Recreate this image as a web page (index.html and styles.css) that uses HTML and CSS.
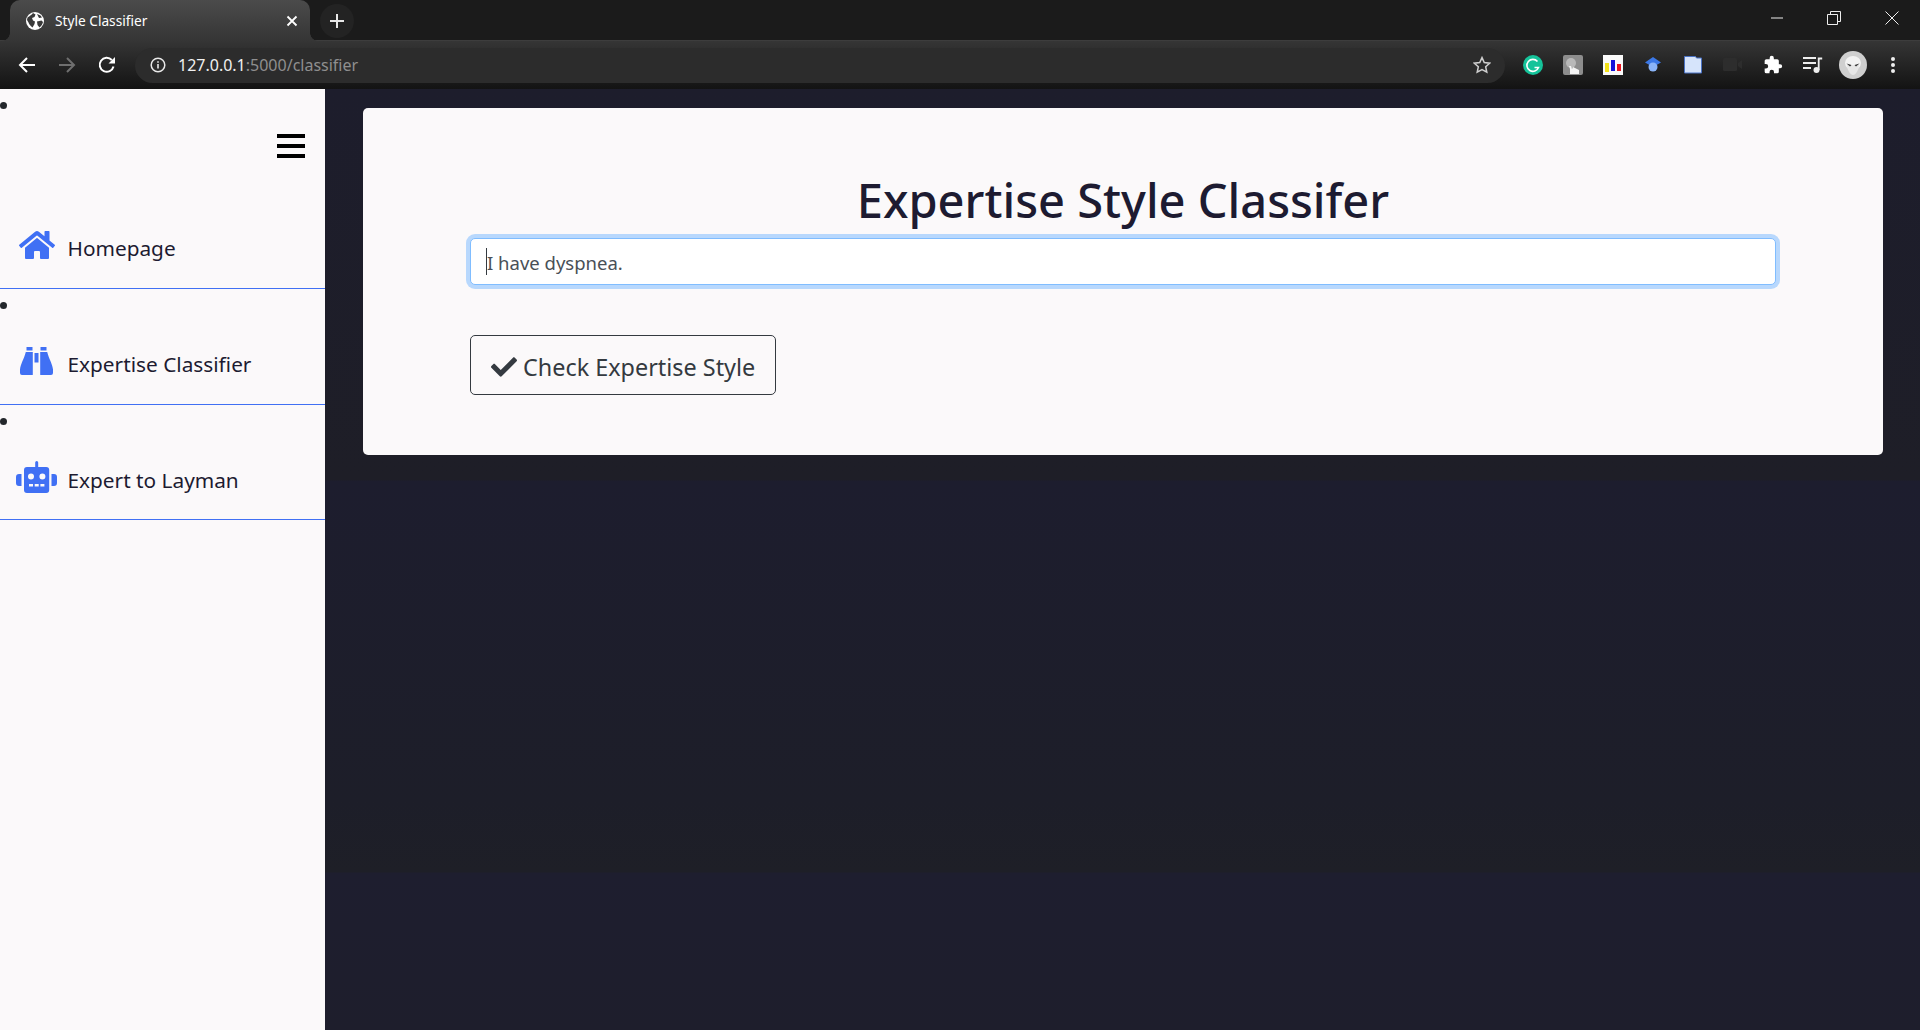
FILE: index.html
```html
<!DOCTYPE html>
<html lang="en">
<head>
<meta charset="utf-8">
<title>Style Classifier</title>
<link rel="stylesheet" href="styles.css">
</head>
<body>
<header class="browser">
  <div class="tabbar">
    <div class="tab">
      <svg class="favicon" viewBox="0 0 18 18" width="18" height="18"><circle cx="9" cy="9" r="9" fill="#fff"/><path d="M1.500 5.500C3.500 4 6 2.500 7 1l2.500 1.500-1 2.500-2.500 1 1 2.500 2 1-.5 2.500-2 3.500C4.500 14 3 12 2.500 10.500L1 8zM11 9.500l4.500-1 1.500 1.500c-.5 2-1.500 4-3.500 5.500L11.500 13zM11 2l3.500 1.500 1.500 2-3 .5z" fill="#3a3a3a"/></svg>
      <span class="tab-title">Style Classifier</span>
      <svg class="tab-close" viewBox="0 0 12 12" width="12" height="12"><path d="M1.500 1.500l9 9M10.500 1.500l-9 9" stroke="#fff" stroke-width="1.800"/></svg>
    </div>
    <div class="newtab"><svg viewBox="0 0 16 16" width="16" height="16"><path d="M8 1v14M1 8h14" stroke="#e8e8e8" stroke-width="2"/></svg></div>
    <div class="winctl">
      <svg viewBox="0 0 14 14" width="14" height="14"><path d="M2 7h12" stroke="#eee" stroke-width="1"/></svg>
      <svg viewBox="0 0 14 14" width="14" height="14"><path d="M.5 3.500h10v10H.5zM3.500 3.500V.5h10v10h-3" fill="none" stroke="#eee" stroke-width="1"/></svg>
      <svg viewBox="0 0 14 14" width="14" height="14"><path d="M.5.5l13 13M13.500.5l-13 13" stroke="#eee" stroke-width="1"/></svg>
    </div>
  </div>
  <div class="toolbar">
    <div class="navbtns">
      <svg viewBox="0 0 18 18" width="18" height="18"><path d="M17 9H2M9 2L2 9l7 7" fill="none" stroke="#fff" stroke-width="2"/></svg>
      <svg viewBox="0 0 18 18" width="18" height="18"><path d="M1 9h15M9 2l7 7-7 7" fill="none" stroke="#6f6f6f" stroke-width="2"/></svg>
      <svg viewBox="0 0 18 18" width="18" height="18"><path d="M15.500 10.500A7 7 0 1 1 13.800 4" fill="none" stroke="#fff" stroke-width="2"/><path d="M10.500 7.500H17V1z" fill="#fff"/></svg>
    </div>
    <div class="omnibox">
      <svg class="info" viewBox="0 0 16 16" width="16" height="16"><circle cx="8" cy="8" r="6.800" fill="none" stroke="#e8e8e8" stroke-width="1.500"/><path d="M8 7v4.500M8 4.200v1.600" stroke="#e8e8e8" stroke-width="1.600"/></svg>
      <span class="url"><span class="host">127.0.0.1</span>:5000/classifier</span>
      <svg class="star" viewBox="0 0 20 20" width="18" height="18"><path d="M10 1.800l2.500 5.500 6 .7-4.400 4 1.200 5.900L10 15l-5.300 2.900 1.200-5.900-4.400-4 6-.7z" fill="none" stroke="#cfcfcf" stroke-width="1.700"/></svg>
    </div>
    <div class="exts">
      <span class="ext"><svg viewBox="0 0 20 20" width="20" height="20"><circle cx="10" cy="10" r="10" fill="#15c39a"/><path d="M14.500 6.500A6 6 0 1 0 15.500 12.500H11.500" fill="none" stroke="#fff" stroke-width="1.600"/></svg></span>
      <span class="ext"><svg viewBox="0 0 20 20" width="20" height="20"><rect width="20" height="20" rx="2" fill="#8d8d8d"/><circle cx="8" cy="8" r="5" fill="#b9b9b9"/><path d="M7 19v-5l-1-3 2 0 1 3 1-2 6 3v4z" fill="#f4f4f4"/></svg></span>
      <span class="ext"><svg viewBox="0 0 20 20" width="20" height="20"><rect width="20" height="20" fill="#fafafa"/><rect x="2" y="8" width="4" height="9" fill="#f4e21a"/><rect x="8" y="5" width="4" height="11" fill="#1414d8"/><rect x="14" y="9" width="4" height="7" fill="#e8141e"/></svg></span>
      <span class="ext"><svg viewBox="0 0 18 18" width="18" height="18"><path d="M9 1l8 5.500-8 4.500-8-4.500z" fill="#3b78e7"/><circle cx="9" cy="11" r="4.500" fill="#8ab4f8"/></svg></span>
      <span class="ext"><svg viewBox="0 0 18 18" width="18" height="18"><path d="M.5.5h11l1 1.500h5v15H.5z" fill="#d6e4fb" stroke="#4a72c4"/></svg></span>
      <span class="ext"><svg viewBox="0 0 20 14" width="20" height="14"><rect width="14" height="13" rx="1.500" fill="#2d2d2d"/><path d="M15 5l4-3v9l-4-3z" fill="#2d2d2d"/></svg></span>
      <span class="ext"><svg viewBox="0 0 24 24" width="20" height="20"><path d="M20.500 11H19V7a2 2 0 0 0-2-2h-4V3.500a2.500 2.500 0 0 0-5 0V5H4a2 2 0 0 0-2 2v3.800h1.500a2.700 2.700 0 0 1 0 5.400H2V20a2 2 0 0 0 2 2h3.800v-1.500a2.700 2.700 0 0 1 5.400 0V22H17a2 2 0 0 0 2-2v-4h1.500a2.500 2.500 0 0 0 0-5z" fill="#fff"/></svg></span>
      <span class="ext"><svg viewBox="0 0 20 18" width="20" height="18"><path d="M0 2h13M0 7h13M0 12h8" stroke="#eee" stroke-width="1.800"/><circle cx="13.500" cy="14" r="3" fill="#eee"/><path d="M15.700 14V2.500h3.500" fill="none" stroke="#eee" stroke-width="1.800"/></svg></span>
      <span class="ext"><svg viewBox="0 0 28 28" width="28" height="28"><circle cx="14" cy="14" r="14" fill="#cfcfcf"/><ellipse cx="14" cy="12" rx="8" ry="7" fill="#f2f2f2"/><path d="M14 24c-3 0-6-6-6-10h12c0 4-3 10-6 10z" fill="#e6e6e6"/><path d="M7.500 12.500l5 1.500-1.500 1.500zM20.500 12.500l-5 1.500 1.500 1.500z" fill="#333"/></svg></span>
      <span class="ext"><svg viewBox="0 0 6 18" width="6" height="18"><circle cx="3" cy="3" r="2" fill="#eee"/><circle cx="3" cy="9" r="2" fill="#eee"/><circle cx="3" cy="15" r="2" fill="#eee"/></svg></span>
    </div>
  </div>
</header>

<div class="app">
  <aside class="sidebar">
    <ul class="nav">
      <li class="nav-item">
        <span class="dot-row"><span class="dot"></span></span>
        <div class="burger-row"><span class="burger"><i></i><i></i><i></i></span></div>
        <a class="nav-link">
          <span class="nav-icon"><svg viewBox="0 0 576 512" width="36" height="32"><path fill="#4070f4" d="M280.37 148.26L96 300.11V464a16 16 0 0 0 16 16l112.06-.29a16 16 0 0 0 15.92-16V368a16 16 0 0 1 16-16h64a16 16 0 0 1 16 16v95.64a16 16 0 0 0 16 16.05L464 480a16 16 0 0 0 16-16V300L295.67 148.26a12.19 12.19 0 0 0-15.3 0zM571.6 251.47L488 182.56V44.05a12 12 0 0 0-12-12h-56a12 12 0 0 0-12 12v72.61L318.47 43a48 48 0 0 0-61 0L4.34 251.47a12 12 0 0 0-1.6 16.9l25.5 31A12 12 0 0 0 45.15 301l235.22-193.74a12.19 12.19 0 0 1 15.3 0L530.9 301a12 12 0 0 0 16.9-1.6l25.5-31a12 12 0 0 0-1.7-16.93z"/></svg></span>
          <span class="nav-label">Homepage</span>
        </a>
      </li>
      <li class="nav-item">
        <span class="dot-row"><span class="dot"></span></span>
        <a class="nav-link">
          <span class="nav-icon"><svg viewBox="0 0 33 28" width="33" height="28"><path fill="#4070f4" d="M6.500 0h6v3.500h-6zM20.500 0h6v3.500h-6zM5.800 5h7v22.500a.5.500 0 0 1-.5.500H2a2 2 0 0 1-2-2v-3.500C.5 17 4 12 5.800 5zM20.200 5h7C29 12 32.500 17 33 22.500V26a2 2 0 0 1-2 2H20.700a.5.500 0 0 1-.5-.5zM14.500 6h4v9.500h-4z"/></svg></span>
          <span class="nav-label">Expertise Classifier</span>
        </a>
      </li>
      <li class="nav-item">
        <span class="dot-row"><span class="dot"></span></span>
        <a class="nav-link">
          <span class="nav-icon"><svg viewBox="0 0 41 32" width="41" height="32"><path fill="#4070f4" fill-rule="evenodd" d="M19.200 1.500a1.500 1.500 0 0 1 3 0V6h8a3 3 0 0 1 3 3v20a3 3 0 0 1-3 3H11a3 3 0 0 1-3-3V9a3 3 0 0 1 3-3h8.200zM15 12.500a3 3 0 1 0 0 6 3 3 0 0 0 0-6zm11.400 0a3 3 0 1 0 0 6 3 3 0 0 0 0-6zM13 23v2.500h4V23zm5.700 0v2.500h4V23zm5.700 0v2.500h4V23z"/><path fill="#4070f4" d="M5.500 13v12H3a3 3 0 0 1-3-3v-6a3 3 0 0 1 3-3zM35.500 13H38a3 3 0 0 1 3 3v6a3 3 0 0 1-3 3h-2.500z"/></svg></span>
          <span class="nav-label">Expert to Layman</span>
        </a>
      </li>
    </ul>
  </aside>
  <main class="content">
    <section class="card">
      <h1 class="title">Expertise Style Classifer</h1>
      <div class="input-wrap">
        <input class="text-input" type="text" value="I have dyspnea." aria-label="Sentence">
        <span class="caret"></span>
      </div>
      <button class="check-btn" type="button">
        <svg viewBox="0 0 512 512" width="26" height="26"><path fill="#343a40" d="M173.898 439.404l-166.4-166.4c-9.997-9.997-9.997-26.206 0-36.204l36.203-36.204c9.997-9.998 26.207-9.998 36.204 0L192 312.69 432.095 72.596c9.997-9.997 26.207-9.997 36.204 0l36.203 36.204c9.997 9.997 9.997 26.206 0 36.204l-294.4 294.401c-9.998 9.997-26.207 9.997-36.204-.001z"/></svg>
        <span class="check-label">Check Expertise Style</span>
      </button>
    </section>
  </main>
</div>
</body>
</html>
```

FILE: styles.css
```css
* { box-sizing: border-box; }
html, body { margin: 0; height: 100%; }
body {
  display: flex;
  flex-direction: column;
  height: 1030px;
  overflow: hidden;
  background: #1d1d2c;
  font-family: "Noto Sans", "Open Sans", sans-serif;
}
.browser { flex: none; height: 89px; display: flex; flex-direction: column; }
.tabbar {
  height: 41px;
  display: flex;
  align-items: stretch;
  background: #1b1b1b;
  border-bottom: 1px solid #3d3d3d;
  padding-left: 10px;
}
.tab {
  position: relative;
  width: 300px;
  height: 41px;
  display: flex;
  align-items: center;
  padding: 0 12px 0 16px;
  border-radius: 10px 10px 0 0;
  background: linear-gradient(#4b4b4b, #353535);
  color: #fff;
}
.tab::before, .tab::after {
  content: "";
  position: absolute;
  bottom: 0;
  width: 8px;
  height: 8px;
}
.tab::before {
  left: -8px;
  background: radial-gradient(circle at 0 0, transparent 7.500px, #363636 8px);
}
.tab::after {
  right: -8px;
  background: radial-gradient(circle at 100% 0, transparent 7.500px, #363636 8px);
}
.favicon { flex: none; }
.tab-title { margin-left: 11px; font-size: 13.700px; flex: 1; white-space: nowrap; }
.tab-close { flex: none; }
.newtab {
  width: 34px;
  height: 34px;
  margin: 4px 0 0 10px;
  border-radius: 50%;
  background: #232323;
  display: flex;
  align-items: center;
  justify-content: center;
}
.winctl {
  margin-left: auto;
  display: flex;
  align-items: flex-start;
  gap: 44px;
  padding: 11px 21px 0 0;
}
.toolbar {
  height: 48px;
  display: flex;
  align-items: center;
  background: linear-gradient(#353535, #131313);
}
.navbtns {
  flex: none;
  width: 135px;
  display: flex;
  align-items: center;
  gap: 22px;
  padding-left: 18px;
}
.omnibox {
  flex: none;
  width: 1370px;
  height: 35px;
  border-radius: 18px;
  background: #2c2c2c;
  display: flex;
  align-items: center;
  padding: 0 14px 0 15px;
}
.info { flex: none; }
.url { margin-left: 12px; font-size: 16px; color: #8f8f8f; white-space: nowrap; flex: 1; }
.host { color: #f0f0f0; }
.star { flex: none; }
.exts { flex: none; margin-left: 8px; display: flex; }
.ext { width: 40px; display: flex; align-items: center; justify-content: center; }

.app { flex: 1; display: flex; min-height: 0; }
.sidebar { flex: none; width: 325px; background: #fbf9fa; }
.nav { list-style: none; margin: 0; padding: 0; }
.dot-row { display: flex; align-items: center; height: 33px; }
.dot { width: 7px; height: 7px; border-radius: 50%; background: #23272b; }
.burger-row { height: 84px; padding: 12px 20px 0 0; display: flex; justify-content: flex-end; }
.burger { display: flex; flex-direction: column; gap: 6px; width: 28px; }
.burger i { display: block; height: 4px; background: #000; }
.nav-link {
  display: flex;
  align-items: center;
  height: 83px;
  padding-left: 16px;
  border-bottom: 1px solid #4070f4;
  color: #1d1b31;
  font-size: 20.800px;
}
.nav-item:last-child .nav-link { height: 82px; }
.nav-icon { flex: none; width: 41px; margin-right: 10.500px; padding-bottom: 4px; display: flex; justify-content: center; }
.nav-icon svg { flex: none; }
.nav-label { padding-top: 2px; }

.content {
  flex: 1;
  padding: 19px 37px 0 38px;
  background: linear-gradient(#1d1d2c 0, #1e1e27 391px, #1d1d2e 392px, #1d1e29 712px, #1e1f27 783px, #1e1e2f 784px, #1e1e2c 100%);
}
.card {
  height: 347px;
  border-radius: 5px;
  background: #fbf9fa;
  padding: 63px 107px 0;
}
.title {
  margin: 0 0 9px;
  text-align: center;
  font-size: 47px;
  line-height: 58px;
  font-weight: 500;
  color: #1d1b31;
}
.input-wrap { position: relative; }
.text-input {
  display: block;
  width: 100%;
  height: 47px;
  padding: 2px 16px 0;
  border: 1px solid #80bdff;
  border-radius: 5px;
  outline: 0;
  box-shadow: 0 0 0 4px #b8d8fd;
  background: #fff;
  color: #495057;
  font: 18.500px "Noto Sans", "Open Sans", sans-serif;
}
.caret {
  position: absolute;
  left: 16px;
  top: 10px;
  width: 1px;
  height: 27px;
  background: #343a40;
}
.check-btn {
  display: flex;
  align-items: center;
  gap: 6px;
  width: 306px;
  height: 60px;
  margin-top: 50px;
  padding: 0 0 0 20px;
  border: 1px solid #343a40;
  border-radius: 5px;
  background: transparent;
  color: #343a40;
  font: 23.400px "Noto Sans", "Open Sans", sans-serif;
  white-space: nowrap;
}
.check-btn svg { flex: none; margin-top: 3px; }
.check-label { padding-top: 3px; }
```
